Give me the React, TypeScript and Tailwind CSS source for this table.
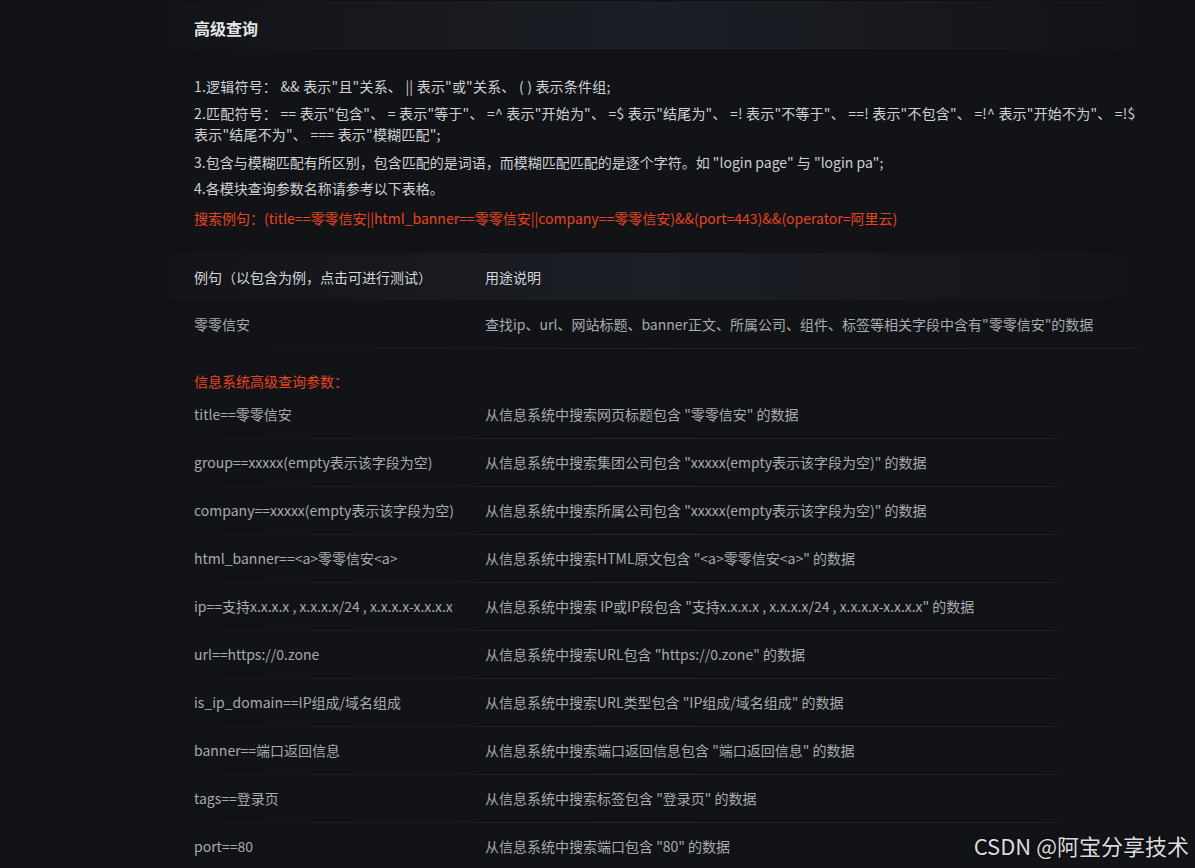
import React from "react";

const rows = [
  ["title==零零信安", '从信息系统中搜索网页标题包含 "零零信安" 的数据'],
  ["group==xxxxx(empty表示该字段为空)", '从信息系统中搜索集团公司包含 "xxxxx(empty表示该字段为空)" 的数据'],
  ["company==xxxxx(empty表示该字段为空)", '从信息系统中搜索所属公司包含 "xxxxx(empty表示该字段为空)" 的数据'],
  ["html_banner==<a>零零信安<a>", '从信息系统中搜索HTML原文包含 "<a>零零信安<a>" 的数据'],
  ["ip==支持x.x.x.x , x.x.x.x/24 , x.x.x.x-x.x.x.x", '从信息系统中搜索 IP或IP段包含 "支持x.x.x.x , x.x.x.x/24 , x.x.x.x-x.x.x.x" 的数据'],
  ["url==https://0.zone", '从信息系统中搜索URL包含 "https://0.zone" 的数据'],
  ["is_ip_domain==IP组成/域名组成", '从信息系统中搜索URL类型包含 "IP组成/域名组成" 的数据'],
  ["banner==端口返回信息", '从信息系统中搜索端口返回信息包含 "端口返回信息" 的数据'],
  ["tags==登录页", '从信息系统中搜索标签包含 "登录页" 的数据'],
  ["port==80", '从信息系统中搜索端口包含 "80" 的数据'],
];

const Divider = ({ wide }: { wide?: boolean }) => (
  <div
    className={`h-px bg-linear-to-r from-transparent via-[#23262d] to-[#1d2026] ${
      wide ? "w-[970px]" : "w-[890px]"
    }`}
  />
);

export default function App() {
  return (
    <div
      className="relative min-h-screen h-[868px] overflow-hidden bg-[#121317] text-[14px]"
      style={{ fontFamily: '"Noto Sans CJK SC", "Noto Sans", sans-serif' }}
    >
      <div className="ml-[170px] w-[990px] pt-[2px]">
        {/* Header */}
        <div className="relative h-[47px] flex items-center pl-6 pt-[4px] bg-linear-to-r from-[#131418] via-[#1b1e25] to-[#121317]">
          <div className="absolute inset-x-0 top-0 h-px bg-linear-to-r from-transparent via-[#23262d] to-transparent" />
          <div className="absolute inset-x-0 bottom-0 h-px bg-linear-to-r from-transparent via-[#22252c] to-transparent" />
          <h1 className="text-[16px] font-bold text-[#e4e6ea]">高级查询</h1>
        </div>

        {/* Notes */}
        <div className="pl-6 pt-[27px] text-[#cdd0d6] leading-[21px]">
          <p className="mb-[6px] tracking-[0.2px]">1.逻辑符号： &amp;&amp; 表示"且"关系、 || 表示"或"关系、 ( ) 表示条件组;</p>
          <p className="mb-[7px] tracking-[0.2px]">
            2.匹配符号： == 表示"包含"、 = 表示"等于"、 =^ 表示"开始为"、 =$ 表示"结尾为"、 =! 表示"不等于"、 ==! 表示"不包含"、 =!^ 表示"开始不为"、 =!$
            <br />
            表示"结尾不为"、 === 表示"模糊匹配";
          </p>
          <p className="mb-[5px]">3.包含与模糊匹配有所区别，包含匹配的是词语，而模糊匹配匹配的是逐个字符。如 "login page" 与 "login pa";</p>
          <p className="mb-[9px]">4.各模块查询参数名称请参考以下表格。</p>
          <p className="text-[#e8441f]">
            搜索例句：(title==零零信安||html_banner==零零信安||company==零零信安)&amp;&amp;(port=443)&amp;&amp;(operator=阿里云)
          </p>
        </div>

        {/* Example table */}
        <div className="mt-[24px]">
          <div className="h-[47px] w-[975px] flex items-center pl-6 pt-px text-[#d3d6db] bg-linear-to-r from-[#131418] via-[#1c1f26] to-[#121317]">
            <div className="w-[291px]">例句（以包含为例，点击可进行测试）</div>
            <div>用途说明</div>
          </div>
          <div className="h-[48px] flex items-center pl-6 text-[#a6aab1]">
            <div className="w-[291px]">零零信安</div>
            <div>查找ip、url、网站标题、banner正文、所属公司、组件、标签等相关字段中含有"零零信安"的数据</div>
          </div>
          <Divider wide />
        </div>

        {/* Params */}
        <div className="pl-6 mt-[22px] h-[20px] leading-[20px] text-[#e8441f]">信息系统高级查询参数：</div>
        <div>
          {rows.map(([q, desc], i) => (
            <div key={i}>
              <div className="h-[47px] flex items-center pl-6 text-[#a6aab1]">
                <div className="w-[291px] whitespace-nowrap">{q}</div>
                <div className="whitespace-nowrap">{desc}</div>
              </div>
              <Divider />
            </div>
          ))}
        </div>
      </div>

      {/* watermark */}
      <div className="absolute right-[6px] bottom-[9px] text-[22px] leading-[28px] text-[#dcdcdc] [text-shadow:0_0_2px_#000]">
        CSDN @阿宝分享技术
      </div>
    </div>
  );
}
